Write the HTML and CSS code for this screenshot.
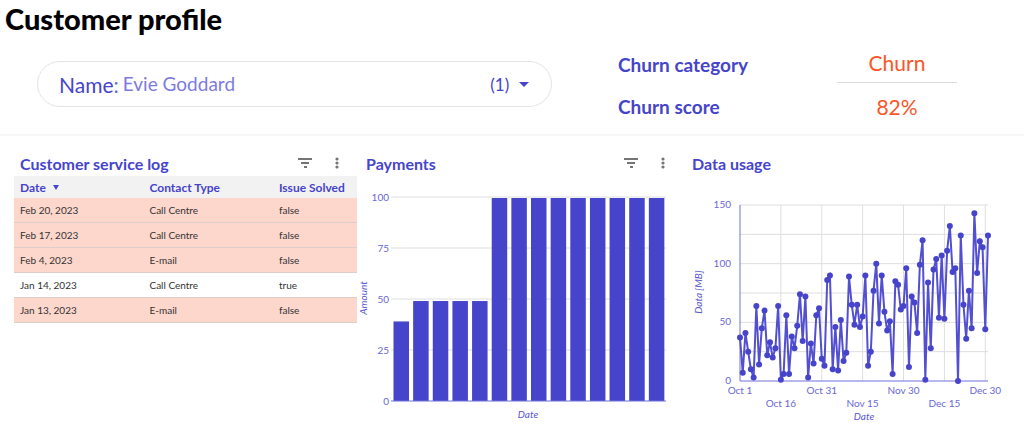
FILE: index.html
```
<!DOCTYPE html>
<html lang="en">
<head>
    <meta charset="UTF-8">
    <meta name="viewport" content="width=device-width, initial-scale=1.0">
    <title>Customer profile</title>
    <link rel="stylesheet" href="styles.css">
</head>
<body>
    <header class="page-header">
        <h1>Customer profile</h1>
        <div class="summary">
            <div class="filter">
                <label for="customer">Name</label><span class="colon">:</span>
                <select id="customer">
                    <option>Evie Goddard</option>
                </select>
                <span class="count">(1)</span>
                <svg class="caret" width="10" height="5" viewBox="0 0 10 5"><path d="M0 0h10L5 5z"/></svg>
            </div>
            <dl class="churn">
                <dt>Churn category</dt>
                <dd class="category">Churn</dd>
                <dt>Churn score</dt>
                <dd>82%</dd>
            </dl>
        </div>
    </header>

    <main class="panels">
        <section class="panel">
            <div class="panel-head">
                <h2>Customer service log</h2>
                <button class="icon-btn" aria-label="Filter">
                    <svg width="14" height="10" viewBox="0 0 14 10"><path d="M0 1h14M3 5h8M6 9h3"/></svg>
                </button>
                <button class="icon-btn" aria-label="More options">
                    <svg width="4" height="12" viewBox="0 0 4 12"><circle cx="2" cy="2" r="1.6"/><circle cx="2" cy="6" r="1.6"/><circle cx="2" cy="10" r="1.6"/></svg>
                </button>
            </div>
            <table class="log">
                <thead>
                    <tr>
                        <th class="col-wide">Date <svg class="sort" width="6" height="5" viewBox="0 0 6 5"><path d="M0 0h6L3 5z"/></svg></th>
                        <th class="col-wide">Contact Type</th>
                        <th>Issue Solved</th>
                    </tr>
                </thead>
                <tbody>
                    <tr class="unsolved"><td>Feb 20, 2023</td><td>Call Centre</td><td>false</td></tr>
                    <tr class="unsolved"><td>Feb 17, 2023</td><td>Call Centre</td><td>false</td></tr>
                    <tr class="unsolved"><td>Feb 4, 2023</td><td>E-mail</td><td>false</td></tr>
                    <tr><td>Jan 14, 2023</td><td>Call Centre</td><td>true</td></tr>
                    <tr class="unsolved"><td>Jan 13, 2023</td><td>E-mail</td><td>false</td></tr>
                </tbody>
            </table>
        </section>

        <section class="panel">
            <div class="panel-head inset">
                <h2>Payments</h2>
                <button class="icon-btn" aria-label="Filter">
                    <svg width="14" height="10" viewBox="0 0 14 10"><path d="M0 1h14M3 5h8M6 9h3"/></svg>
                </button>
                <button class="icon-btn" aria-label="More options">
                    <svg width="4" height="12" viewBox="0 0 4 12"><circle cx="2" cy="2" r="1.6"/><circle cx="2" cy="6" r="1.6"/><circle cx="2" cy="10" r="1.6"/></svg>
                </button>
            </div>
            <svg class="chart" id="payments" viewBox="0 0 326 246"></svg>
        </section>

        <section class="panel">
            <div class="panel-head inset">
                <h2>Data usage</h2>
            </div>
            <svg class="chart" id="usage" viewBox="0 0 327 246"></svg>
        </section>
    </main>

    <script>
        const payments = [39, 49, 49, 49, 49, 99.5, 99.5, 99.5, 99.5, 99.5, 99.5, 99.5, 99.5, 99.5];

        // MB per day, Oct 1 - Dec 31
        const usage = [
            37, 7, 41, 25, 10, 3, 64, 14, 45, 60, 22, 33, 20, 28, 64, 1, 6, 56, 6, 38, 28, 47, 74, 34, 72, 3, 32, 15, 56, 62, 19,
            13, 86, 90, 10, 46, 9, 52, 17, 24, 89, 65, 48, 65, 46, 55, 90, 13, 25, 77, 100, 49, 90, 59, 43, 51, 6, 85, 82, 61, 64,
            96, 12, 72, 67, 41, 99, 120, 1, 84, 28, 95, 104, 54, 107, 53, 111, 132, 93, 96, 0, 124, 65, 36, 77, 45, 143, 92, 119, 114, 44, 124
        ];

        function add(parent, tag, attrs, text) {
            const el = document.createElementNS('http://www.w3.org/2000/svg', tag);
            for (const key in attrs) el.setAttribute(key, attrs[key]);
            if (text !== undefined) el.textContent = text;
            parent.appendChild(el);
        }

        function line(svg, cls, x1, y1, x2, y2) {
            add(svg, 'line', { class: cls, x1, y1, x2, y2 });
        }

        function drawPayments() {
            const svg = document.getElementById('payments');
            const left = 34, right = 309, top = 17, bottom = 221;
            const y = v => bottom - v / 100 * (bottom - top);

            for (let v = 0; v <= 100; v += 25) {
                if (v > 0) line(svg, 'grid', left, y(v), right, y(v));
                add(svg, 'text', { class: 'tick end', x: left - 2, y: y(v) + 4 }, v);
            }
            const step = (right - left) / payments.length;
            payments.forEach((v, i) => {
                add(svg, 'rect', { class: 'bar', x: left + i * step + 2.5, y: y(v), width: 15.5, height: bottom - y(v) });
            });
            line(svg, 'axis', left, bottom, right, bottom);
            add(svg, 'text', { class: 'axis-title', x: 171, y: 238 }, 'Date');
            add(svg, 'text', { class: 'axis-title', transform: 'translate(10 118) rotate(-90)' }, 'Amount');
        }

        function drawUsage() {
            const svg = document.getElementById('usage');
            const left = 57, right = 305, top = 25, bottom = 201;
            const x = d => left + d / (usage.length - 1) * (right - left);
            const y = v => bottom - v / 150 * (bottom - top);

            for (let v = 0; v <= 150; v += 25) {
                if (v > 0) line(svg, 'grid', left, y(v), right, y(v));
                if (v % 50 === 0) add(svg, 'text', { class: 'tick end', x: left - 9, y: y(v) + 3 }, v);
            }
            ['Oct 1', 'Oct 16', 'Oct 31', 'Nov 15', 'Nov 30', 'Dec 15', 'Dec 30'].forEach((label, i) => {
                if (i > 0) line(svg, 'grid', x(i * 15), top, x(i * 15), bottom);
                // every other label drops to a second row
                add(svg, 'text', { class: 'tick middle', x: x(i * 15), y: i % 2 ? 227 : 214 }, label);
            });
            line(svg, 'axis', left, top, left, bottom);
            line(svg, 'axis', left, bottom, right, bottom);
            add(svg, 'polyline', { class: 'series', points: usage.map((v, i) => x(i) + ',' + y(v)).join(' ') });
            usage.forEach((v, i) => add(svg, 'circle', { class: 'dot', cx: x(i), cy: y(v), r: 3 }));
            add(svg, 'text', { class: 'axis-title', x: 181, y: 240 }, 'Date');
            add(svg, 'text', { class: 'axis-title', transform: 'translate(19 112) rotate(-90)' }, 'Data [MB]');
        }

        drawPayments();
        drawUsage();
    </script>
</body>
</html>
```
FILE: styles.css
```
body {
    margin: 0;
    background: white;
    color: #4644cb;
    font-family: Lato, "Liberation Sans", sans-serif;
}
.page-header {
    border-bottom: 2px solid #f7f7f7;
    padding-bottom: 6px;
}
h1 {
    margin: 0;
    padding-left: 5px;
    color: black;
    font-size: 29px;
    line-height: 38px;
    font-weight: 900;
}
.summary {
    display: flex;
    justify-content: space-between;
    align-items: flex-start;
    padding: 0 67px 0 37px;
}
.filter {
    display: flex;
    align-items: center;
    box-sizing: border-box;
    width: 56%;
    height: 46px;
    margin-top: 23px;
    padding: 0 22px 0 21px;
    border: 1px solid #e4e4e4;
    border-radius: 23px;
    font-size: 21px;
}
.colon {
    opacity: 0.8;
}
.filter select {
    flex: 1;
    appearance: none;
    margin: 0 0 0 4px;
    padding: 0;
    border: none;
    background: none;
    color: #7d7bdf;
    font-family: inherit;
    font-size: 19px;
    line-height: 24px;
}
.count {
    font-size: 17px;
}
.caret {
    margin-left: 10px;
    fill: #4644cb;
}
.churn {
    display: grid;
    grid-template-columns: 1fr 120px;
    width: 339px;
    margin: 0;
    padding-top: 6px;
    line-height: 42px;
}
.churn dt {
    font-size: 19px;
    font-weight: 700;
}
.churn dd {
    align-self: start;
    margin: 0;
    color: #fb5628;
    font-size: 21px;
    text-align: center;
}
.churn .category {
    line-height: 38px;
    border-bottom: 1px solid #dcdcdc;
}
.panels {
    display: grid;
    grid-template-columns: 343fr 326fr 327fr;
    padding: 0 14px;
}
.panel-head {
    display: flex;
    align-items: center;
    height: 26px;
    padding: 14px 18px 0 6px;
}
.panel-head.inset {
    padding-left: 9px;
}
h2 {
    flex: 1;
    margin: 0;
    font-size: 16px;
    font-weight: 700;
}
.icon-btn {
    display: flex;
    align-items: center;
    margin-left: 23px;
    padding: 0;
    border: none;
    background: none;
    cursor: pointer;
}
.icon-btn path {
    stroke: #757575;
    stroke-width: 2;
}
.icon-btn circle {
    fill: #757575;
}
.log {
    width: 100%;
    border-collapse: collapse;
    table-layout: fixed;
    text-align: left;
}
.log th {
    height: 22px;
    padding: 0 0 0 6px;
    background: #f2f2f2;
    font-size: 12px;
    font-weight: 700;
}
.col-wide {
    width: 36%;
}
.sort {
    margin: 0 0 2px 4px;
    fill: #4644cb;
}
.log td {
    height: 24px;
    padding: 0 0 0 6px;
    border-bottom: 1px solid #dccfcb;
    color: #333;
    font-size: 10px;
}
.unsolved {
    background: #fdd7cc;
}
.chart {
    display: block;
    width: 100%;
    margin-top: 4px;
}
.chart text {
    fill: #6967d6;
    font-size: 10px;
}
.chart .end {
    text-anchor: end;
}
.chart .middle {
    text-anchor: middle;
}
.chart .axis-title {
    fill: #5856d0;
    font-style: italic;
    text-anchor: middle;
}
.grid {
    stroke: #dedede;
}
.axis {
    stroke: #7270d8;
}
.bar {
    fill: #4644cb;
}
.series {
    fill: none;
    stroke: #5250d0;
    stroke-width: 2;
}
.dot {
    fill: #4644cb;
}
```
